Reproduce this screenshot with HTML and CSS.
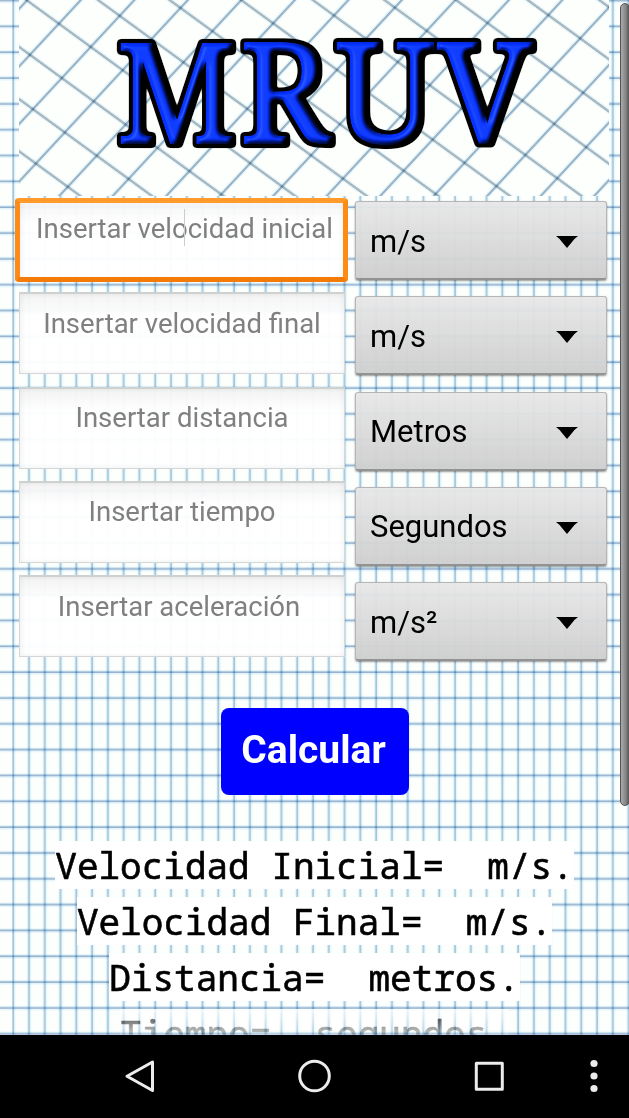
FILE: index.html
```
<!DOCTYPE html>
<html lang="es">
<head>
<meta charset="utf-8">
<title>MRUV</title>
<link rel="stylesheet" href="styles.css">
</head>
<body>
<div class="app">
  <main class="sheet">
    <svg class="paper" width="629" height="1035" aria-hidden="true">
      <defs>
        <pattern id="cols" x="11.1" y="0" width="15.78" height="100" patternUnits="userSpaceOnUse">
          <rect width="4.4" height="100" fill="#e6f6fd"/><rect x="1.4" width="1.4" height="100" fill="#9cbad5"/>
        </pattern>
        <pattern id="rows" x="0" y="-1.6" width="100" height="25.83" patternUnits="userSpaceOnUse">
          <rect width="100" height="4.6" fill="#e6f6fd"/><rect y="1.4" width="100" height="1.6" fill="#96b0d0"/>
        </pattern>
      </defs>
      <rect width="629" height="1035" fill="#fdfffd"/>
      <rect class="ink" x="12" width="617" height="1035" fill="url(#cols)"/>
      <rect class="ink" width="629" height="1035" fill="url(#rows)"/>
    </svg>
    <div class="content">
      <svg class="banner" width="590" height="196" viewBox="19 0 590 196" role="img" aria-label="MRUV">
        <defs>
          <pattern id="down" x="22.5" y="0" width="71.6" height="200" patternUnits="userSpaceOnUse" patternTransform="skewX(53.9)">
            <rect width="8" height="200" fill="#e6f5fc"/><rect x="2" width="3.8" height="200" fill="#a8b6c1"/>
          </pattern>
          <pattern id="up" x="24" y="0" width="53.5" height="200" patternUnits="userSpaceOnUse" patternTransform="skewX(-42.9)">
            <rect width="6.4" height="200" fill="#e6f5fc"/><rect x="2" width="2.7" height="200" fill="#98b0c6"/>
          </pattern>
          <filter id="bevel" x="-10%" y="-10%" width="120%" height="120%" color-interpolation-filters="sRGB">
            <feMorphology in="SourceAlpha" operator="dilate" radius="2" result="grown"/>
            <feGaussianBlur in="grown" stdDeviation="1.4" result="soft"/>
            <feComponentTransfer in="soft" result="edge"><feFuncA type="linear" slope="7" intercept="-.4"/></feComponentTransfer>
            <feGaussianBlur in="SourceAlpha" stdDeviation="2.8" result="b"/>
            <feDiffuseLighting in="b" surfaceScale="5" diffuseConstant="1.35" lighting-color="#fff" result="d">
              <feDistantLight azimuth="205" elevation="48"/>
            </feDiffuseLighting>
            <feComposite in="d" in2="SourceGraphic" operator="arithmetic" k1="1" result="lit"/>
            <feSpecularLighting in="b" surfaceScale="5" specularConstant=".45" specularExponent="16" lighting-color="#a0b0ff" result="s">
              <feDistantLight azimuth="205" elevation="48"/>
            </feSpecularLighting>
            <feComposite in="lit" in2="s" operator="arithmetic" k2="1" k3=".5" result="sum"/>
            <feComposite in="sum" in2="SourceAlpha" operator="in" result="face"/>
            <feMerge><feMergeNode in="edge"/><feMergeNode in="face"/></feMerge>
          </filter>
        </defs>
        <rect x="19" width="590" height="196" fill="#fdfffd"/>
        <rect class="ink" x="19" width="590" height="196" fill="url(#down)"/>
        <rect class="ink" x="19" width="590" height="196" fill="url(#up)"/>
        <g class="title" filter="url(#bevel)">
          <text x="117" y="142.5" textLength="119" lengthAdjust="spacingAndGlyphs">M</text>
          <text x="240" y="142.5" textLength="90" lengthAdjust="spacingAndGlyphs">R</text>
          <text x="336" y="142.5" textLength="99" lengthAdjust="spacingAndGlyphs">U</text>
          <text x="438" y="142.5" textLength="94" lengthAdjust="spacingAndGlyphs">V</text>
        </g>
      </svg>
      <div class="form">
        <div class="fields">
          <div class="field focused"><span>Insertar velocidad inicial</span><i class="caret"></i></div>
          <div class="field"><span>Insertar velocidad final</span></div>
          <div class="field"><span>Insertar distancia</span></div>
          <div class="field"><span>Insertar tiempo</span></div>
          <div class="field last"><span>Insertar aceleración</span></div>
        </div>
        <div class="units">
          <div class="unit"><span>m/s</span><svg class="arrow" viewBox="0 0 22 12"><path d="M0 0H22Q19 2 16 6L11 12L6 6Q3 2 0 0Z"/></svg></div>
          <div class="unit"><span>m/s</span><svg class="arrow" viewBox="0 0 22 12"><path d="M0 0H22Q19 2 16 6L11 12L6 6Q3 2 0 0Z"/></svg></div>
          <div class="unit"><span>Metros</span><svg class="arrow" viewBox="0 0 22 12"><path d="M0 0H22Q19 2 16 6L11 12L6 6Q3 2 0 0Z"/></svg></div>
          <div class="unit"><span>Segundos</span><svg class="arrow" viewBox="0 0 22 12"><path d="M0 0H22Q19 2 16 6L11 12L6 6Q3 2 0 0Z"/></svg></div>
          <div class="unit"><span>m/s²</span><svg class="arrow" viewBox="0 0 22 12"><path d="M0 0H22Q19 2 16 6L11 12L6 6Q3 2 0 0Z"/></svg></div>
        </div>
      </div>
      <div class="calc">Calcular</div>
      <div class="results">
        <div class="result">Velocidad Inicial=  m/s.</div>
        <div class="result">Velocidad Final=  m/s.</div>
        <div class="result">Distancia=  metros.</div>
        <div class="result fading">Tiempo=  segundos.</div>
      </div>
    </div>
    <div class="scrollbar"></div>
  </main>
  <nav class="navbar">
    <svg width="629" height="83" viewBox="0 1035 629 83" fill="none" stroke="#ececec" stroke-width="3" stroke-linejoin="round">
      <path d="M152.5 1062V1090.5L127 1076.3Z"/>
      <circle cx="314.5" cy="1076" r="14.8"/>
      <rect x="476.3" y="1063.3" width="26" height="26"/>
      <g fill="#ececec" stroke="none"><circle cx="594" cy="1063.5" r="3.6"/><circle cx="594" cy="1076" r="3.6"/><circle cx="594" cy="1088.5" r="3.6"/></g>
    </svg>
  </nav>
</div>
</body>
</html>
```
FILE: styles.css
```
*, *::before { box-sizing: border-box; }
body { margin: 0; background: #000; font-family: Roboto, sans-serif; }
.app { display: flex; flex-direction: column; width: 629px; height: 1118px; overflow: hidden; }
.sheet { position: relative; height: 1035px; overflow: hidden; flex: none; }
.paper { position: absolute; left: 0; top: 0; }
.ink { mix-blend-mode: multiply; }
.content { position: relative; display: flex; flex-direction: column; align-items: center; }
.banner { display: block; align-self: flex-start; margin-left: 19px; }
.title {
  font-family: "Noto Serif", "DejaVu Serif", serif; font-size: 139px;
  fill: #0530ff; stroke: #0530ff; stroke-width: 2.6px; stroke-linejoin: round;
}

.form { display: flex; gap: 9.5px; width: 100%; height: 512px; padding-left: 19px; }
.fields { display: flex; flex-direction: column; gap: 12.3px; padding-top: 2px; width: 326px; }
.field {
  position: relative; display: flex; justify-content: center; height: 82px; padding-top: 12.4px;
  font-size: 27.5px; line-height: 34px; color: #808080; white-space: nowrap;
  border: 1px solid #d5d7d7; border-top: 2px solid #cfd1d1;
  background: linear-gradient(rgba(242,242,242,.95), rgba(255,255,255,.96) 22px);
  box-shadow: inset 3px 0 5px rgba(0,0,0,.04), inset -3px 0 5px rgba(0,0,0,.03);
}
.focused { border-color: transparent; padding-left: 5px; }
.last { padding-right: 6px; }
.focused::before {
  content: ""; position: absolute; left: -5px; top: -2px; width: 333px; height: 84px; border-radius: 4px;
  border: 5px solid #ff8b14; border-top-color: #ff9a2b; border-bottom-color: #f57b08;
}
.caret { position: absolute; left: 164px; top: 9px; width: 1px; height: 37px; background: #ccc; }
.units { display: flex; flex-direction: column; gap: 16.3px; padding-top: 5px; width: 252.5px; }
.unit {
  display: flex; align-items: center; justify-content: space-between; height: 79px; padding: 2px 28px 0 14.5px;
  font-size: 31px; color: #000; border-radius: 3px; border: 1px solid #b5b5b5; border-bottom: 2px solid #929292;
  background: linear-gradient(rgba(231,231,231,.95), rgba(207,207,207,.97));
  box-shadow: 0 1px 2px rgba(0,0,0,.4);
}
.arrow { width: 22px; height: 12px; margin-top: 2px; }
.calc {
  width: 188px; height: 87px; border-radius: 8px; background: #00f; color: #fff;
  font-size: 39px; font-weight: 700; line-height: 84px; text-align: center; padding-right: 2px;
}
.results { display: flex; flex-direction: column; align-items: center; gap: 8px; margin-top: 46px; }
.result {
  height: 48px; padding-bottom: 4px; background: #fff; color: #000; white-space: pre;
  font: 36px/50px "Noto Sans Mono", "DejaVu Sans Mono", monospace;
  -webkit-text-stroke: .6px #000;
}
.fading { -webkit-mask-image: linear-gradient(rgba(0,0,0,.8), transparent 34px); mask-image: linear-gradient(rgba(0,0,0,.8), transparent 34px); }
.scrollbar {
  position: absolute; left: 620px; top: 3px; width: 10px; height: 803px; border-radius: 5px;
  border: 1px solid #555; background: linear-gradient(90deg, #aaa, #858585 60%, #555);
}
.navbar { height: 83px; background: #000; }
.navbar svg { display: block; }
```
